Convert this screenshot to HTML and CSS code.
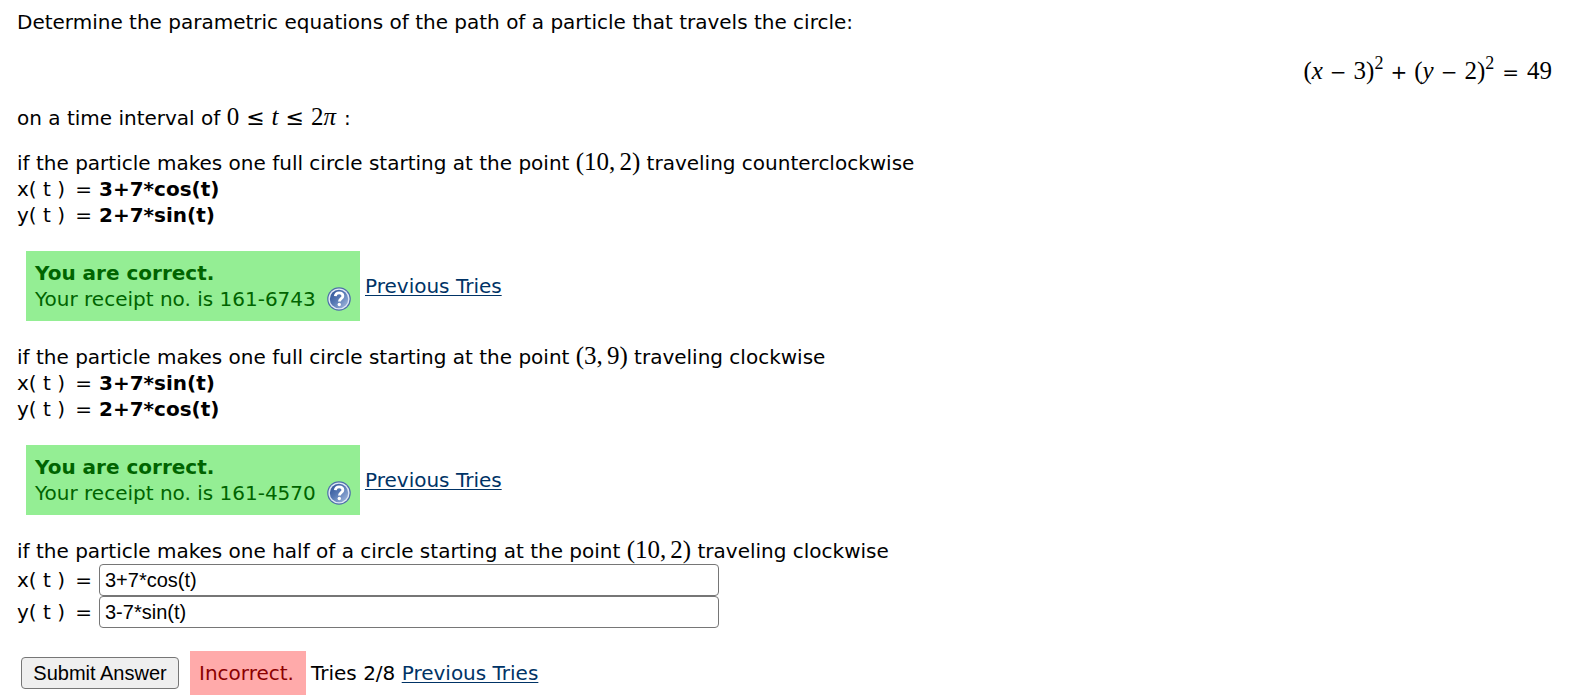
FILE: index.html
```html
<!DOCTYPE html>
<html lang="en">
<head>
<meta charset="utf-8">
<title>Parametric equations</title>
<link rel="stylesheet" href="styles.css">
</head>
<body>
<svg class="defs" width="0" height="0" aria-hidden="true">
  <defs>
    <linearGradient id="disc" x1="0" y1="0" x2="1" y2="1">
      <stop offset="0" stop-color="#2a4f94"/>
      <stop offset="0.45" stop-color="#5577b3"/>
      <stop offset="1" stop-color="#a9bfe2"/>
    </linearGradient>
    <symbol id="help" viewBox="0 0 24 24">
      <circle cx="12" cy="12" r="11.8" fill="#4d6fa9"/>
      <circle cx="12" cy="12" r="10.6" fill="#dfe7f5"/>
      <circle cx="12" cy="12" r="9.2" fill="url(#disc)"/>
      <path d="M8.300 9.200C8.500 6.800 10 5.800 12.100 5.800c2.200 0 3.800 1.200 3.800 3.100 0 2.700-3.500 2.700-3.500 5.500" fill="none" stroke="#fff" stroke-width="2.800"/>
      <circle cx="12.300" cy="17.500" r="1.700" fill="#fff"/>
    </symbol>
  </defs>
</svg>
<form class="problem">
  <p class="intro">Determine the parametric equations of the path of a particle that travels the circle:</p>
  <p class="equation math">(<i>x</i><span class="op">−</span>3)<sup>2</sup><span class="op">+</span>(<i>y</i><span class="op">−</span>2)<sup>2</sup><span class="op eq">=</span>49</p>
  <p class="interval">on a time interval of <span class="math">0<span class="op rel">≤</span><i>t</i><span class="op rel">≤</span>2<i>π</i></span><span class="colon">:</span></p>

  <section class="part">
    <p>if the particle makes one full circle starting at the point <span class="math">(10,<span class="thin"></span>2)</span> traveling counterclockwise</p>
    <p class="answer"><span class="name"><span>x( t )</span> <span>=</span></span><b>3+7*cos(t)</b></p>
    <p class="answer"><span class="name"><span>y( t )</span> <span>=</span></span><b>2+7*sin(t)</b></p>
    <div class="status graded">
      <div class="box correct"><b>You are correct.</b><span class="receipt">Your receipt no. is 161-6743 <svg class="help" role="img" aria-label="Help"><use href="#help"/></svg></span></div>
      <a href="#tries">Previous Tries</a>
    </div>
  </section>

  <section class="part">
    <p>if the particle makes one full circle starting at the point <span class="math">(3,<span class="thin"></span>9)</span> traveling clockwise</p>
    <p class="answer"><span class="name"><span>x( t )</span> <span>=</span></span><b>3+7*sin(t)</b></p>
    <p class="answer"><span class="name"><span>y( t )</span> <span>=</span></span><b>2+7*cos(t)</b></p>
    <div class="status graded">
      <div class="box correct"><b>You are correct.</b><span class="receipt">Your receipt no. is 161-4570 <svg class="help" role="img" aria-label="Help"><use href="#help"/></svg></span></div>
      <a href="#tries">Previous Tries</a>
    </div>
  </section>

  <section class="part">
    <p>if the particle makes one half of a circle starting at the point <span class="math">(10,<span class="thin"></span>2)</span> traveling clockwise</p>
    <div class="answer"><label class="name" for="xt"><span>x( t )</span> <span>=</span></label><input id="xt" type="text" value="3+7*cos(t)"></div>
    <div class="answer"><label class="name" for="yt"><span>y( t )</span> <span>=</span></label><input id="yt" type="text" value="3-7*sin(t)"></div>
    <div class="status open">
      <button type="button">Submit Answer</button>
      <div class="box incorrect">Incorrect.</div>
      <span class="tries">Tries 2/8 <a href="#tries">Previous Tries</a></span>
    </div>
  </section>
</form>
</body>
</html>
```
FILE: styles.css
```css
* {
  box-sizing: border-box;
}

body {
  margin: 0;
  background: #fff;
  color: #000;
  font-family: Verdana, "DejaVu Sans", sans-serif;
  font-size: 20px;
  line-height: 26px;
}

p {
  margin: 0;
}

a {
  color: #003366;
  text-decoration-thickness: 1px;
  text-underline-offset: 2px;
}

.defs {
  position: absolute;
}

.problem {
  padding: 9px 17px 0;
}

.math {
  font-family: "Liberation Serif", serif;
  font-size: 25px;
  line-height: 20px;
}

.math sup {
  font-size: 18px;
  line-height: 0;
  vertical-align: 10px;
}

.op {
  margin: 0 7px;
  font-family: "DejaVu Sans", sans-serif;
  font-size: 20px;
}

.eq {
  margin: 0 8px;
}

.rel {
  font-size: 22px;
}

.thin {
  margin-left: 4px;
}

.equation {
  padding: 23px 9px 0 0;
  line-height: 26px;
  text-align: right;
}

.interval {
  margin: 20px 0 19px;
}

.colon {
  margin-left: 8px;
}

.part {
  margin-bottom: 23px;
}

.status {
  display: flex;
  align-items: center;
  margin-top: 23px;
}

.graded {
  gap: 5px;
  padding-left: 9px;
}

.open {
  gap: 5px;
  padding-left: 4px;
}

.box {
  padding: 9px;
}

.correct {
  display: flex;
  flex-direction: column;
  min-width: 334px;
  background: #94ee94;
  color: #006400;
}

.receipt {
  display: flex;
  align-items: center;
  justify-content: space-between;
}

.help {
  width: 24px;
  height: 24px;
}

.incorrect {
  min-width: 116px;
  margin-left: 6px;
  background: #ffaaaa;
  color: #8b0000;
}

.answer {
  display: flex;
  align-items: center;
  gap: 7px;
}

.name {
  display: flex;
  justify-content: space-between;
  width: 75px;
}

input,
button {
  height: 32px;
  border: 1px solid #767676;
  border-radius: 4px;
  font-family: "Liberation Sans", sans-serif;
  font-size: 20px;
  color: #000;
}

input {
  width: 620px;
  padding: 0 5px;
  background: #fff;
}

button {
  min-width: 158px;
  padding: 0 11px;
  background: #efefef;
}
```
